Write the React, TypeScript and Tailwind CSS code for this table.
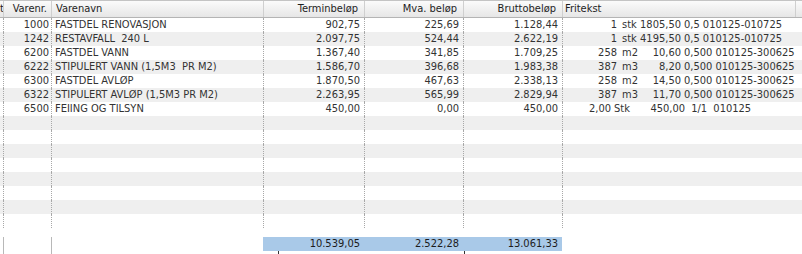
import React from 'react';

type Row = {
  nr: string;
  navn: string;
  termin: string;
  mva: string;
  brutto: string;
  qty: string;
  unit: string;
  price: string;
  rest: string;
  alt?: boolean;
};

const ROWS: Row[] = [
  { nr: '1000', navn: 'FASTDEL RENOVASJON', termin: '902,75', mva: '225,69', brutto: '1.128,44', qty: '1', unit: 'stk', price: '1805,50', rest: '0,5 010125-010725' },
  { nr: '1242', navn: 'RESTAVFALL  240 L', termin: '2.097,75', mva: '524,44', brutto: '2.622,19', qty: '1', unit: 'stk', price: '4195,50', rest: '0,5 010125-010725' },
  { nr: '6200', navn: 'FASTDEL VANN', termin: '1.367,40', mva: '341,85', brutto: '1.709,25', qty: '258', unit: 'm2', price: '10,60', rest: '0,500 010125-300625' },
  { nr: '6222', navn: 'STIPULERT VANN (1,5M3  PR M2)', termin: '1.586,70', mva: '396,68', brutto: '1.983,38', qty: '387', unit: 'm3', price: '8,20', rest: '0,500 010125-300625' },
  { nr: '6300', navn: 'FASTDEL AVLØP', termin: '1.870,50', mva: '467,63', brutto: '2.338,13', qty: '258', unit: 'm2', price: '14,50', rest: '0,500 010125-300625' },
  { nr: '6322', navn: 'STIPULERT AVLØP (1,5M3 PR M2)', termin: '2.263,95', mva: '565,99', brutto: '2.829,94', qty: '387', unit: 'm3', price: '11,70', rest: '0,500 010125-300625' },
  { nr: '6500', navn: 'FEIING OG TILSYN', termin: '450,00', mva: '0,00', brutto: '450,00', qty: '2,00', unit: 'Stk', price: '450,00', rest: ' 1/1  010125', alt: true },
];

const EMPTY_ROWS = 8;

function Fritekst({ row }: { row: Row }) {
  return (
    <div className="flex whitespace-pre">
      <span className={`${row.alt ? 'w-[48px]' : 'w-[54px]'} shrink-0 text-right`}>{row.qty}</span>
      <span className={`${row.alt ? 'ml-[3px] w-[22px]' : 'ml-[5px] w-[16px]'} shrink-0`}>{row.unit}</span>
      <span className={`${row.alt ? 'w-[49px]' : 'w-[43px]'} shrink-0 text-right`}>{row.price}</span>
      <span className="ml-[3px]">{row.rest}</span>
    </div>
  );
}

export default function App() {
  const cell = 'h-[14px] border-r border-dotted border-[#a8a8a8] overflow-hidden';
  const head = 'h-full border-r border-[#cfcfcf] overflow-hidden';

  return (
    <div
      className="w-[802px] h-[254px] overflow-hidden bg-white text-[11px] leading-[14px] text-[#333]"
      style={{ fontFamily: '"DejaVu Sans Condensed", "DejaVu Sans", sans-serif' }}
    >
      {/* Header */}
      <div className="flex h-[18px] border-t border-b border-t-[#c4c4c4] border-b-[#b4b4b4] bg-gradient-to-b from-[#fbfbfb] to-[#e6e6e6] text-[#1e1e1e] leading-[16px]">
        <div className={`${head} w-[4px] text-right`}>
          <span className="inline-block -mr-[1px]">t</span>
        </div>
        <div className={`${head} w-[48px] text-right pr-[4px]`}>Varenr.</div>
        <div className={`${head} w-[212px] pl-[4px]`}>Varenavn</div>
        <div className={`${head} w-[101px] text-right pr-[6px]`}>Terminbeløp</div>
        <div className={`${head} w-[99px] text-right pr-[6px]`}>Mva. beløp</div>
        <div className={`${head} w-[99px] text-right pr-[6px]`}>Bruttobeløp</div>
        <div className={`${head} w-[233px] pl-[2px]`}>Fritekst</div>
        <div className="flex-1" />
      </div>

      {/* Rows */}
      <div className="flex flex-col">
        {ROWS.map((r, i) => (
          <div key={r.nr} className={`flex ${i % 2 === 1 ? 'bg-[#efefef]' : 'bg-white'}`}>
            <div className={`${cell} w-[4px]`} />
            <div className={`${cell} w-[48px] text-right pr-[2px]`}>{r.nr}</div>
            <div className={`${cell} w-[212px] pl-[3px] whitespace-pre`}>{r.navn}</div>
            <div className={`${cell} w-[101px] text-right pr-[4px]`}>{r.termin}</div>
            <div className={`${cell} w-[99px] text-right pr-[4px]`}>{r.mva}</div>
            <div className={`${cell} w-[99px] text-right pr-[4px]`}>{r.brutto}</div>
            <div className="h-[14px] flex-1 overflow-hidden">
              <Fritekst row={r} />
            </div>
          </div>
        ))}
        {Array.from({ length: EMPTY_ROWS }).map((_, j) => {
          const i = ROWS.length + j;
          return (
            <div key={i} className={`flex ${i % 2 === 1 ? 'bg-[#efefef]' : 'bg-white'}`}>
              <div className={`${cell} w-[4px]`} />
              <div className={`${cell} w-[48px]`} />
              <div className={`${cell} w-[212px]`} />
              <div className={`${cell} w-[101px]`} />
              <div className={`${cell} w-[99px]`} />
              <div className={`${cell} w-[99px]`} />
              <div className="h-[14px] flex-1" />
            </div>
          );
        })}
      </div>

      {/* Totals */}
      <div className="mt-[9px] flex h-[17px]">
        <div className="w-[4px] border-r border-[#b8b8b8]" />
        <div className="w-[48px] border-r border-[#b8b8b8]" />
        <div className="w-[211px]" />
        <div className="flex flex-col">
          <div className="flex h-[14px] bg-[#a9c9e8] text-[#1c1c1c]">
            <div className="w-[101px] text-right pr-[4px]">10.539,05</div>
            <div className="w-[99px] text-right pr-[4px]">2.522,28</div>
            <div className="w-[99px] text-right pr-[4px]">13.061,33</div>
          </div>
          <div className="flex h-[3px]">
            <div className="ml-[15px] w-px bg-[#333]" />
            <div className="ml-[185px] w-px bg-[#333]" />
          </div>
        </div>
      </div>
    </div>
  );
}
